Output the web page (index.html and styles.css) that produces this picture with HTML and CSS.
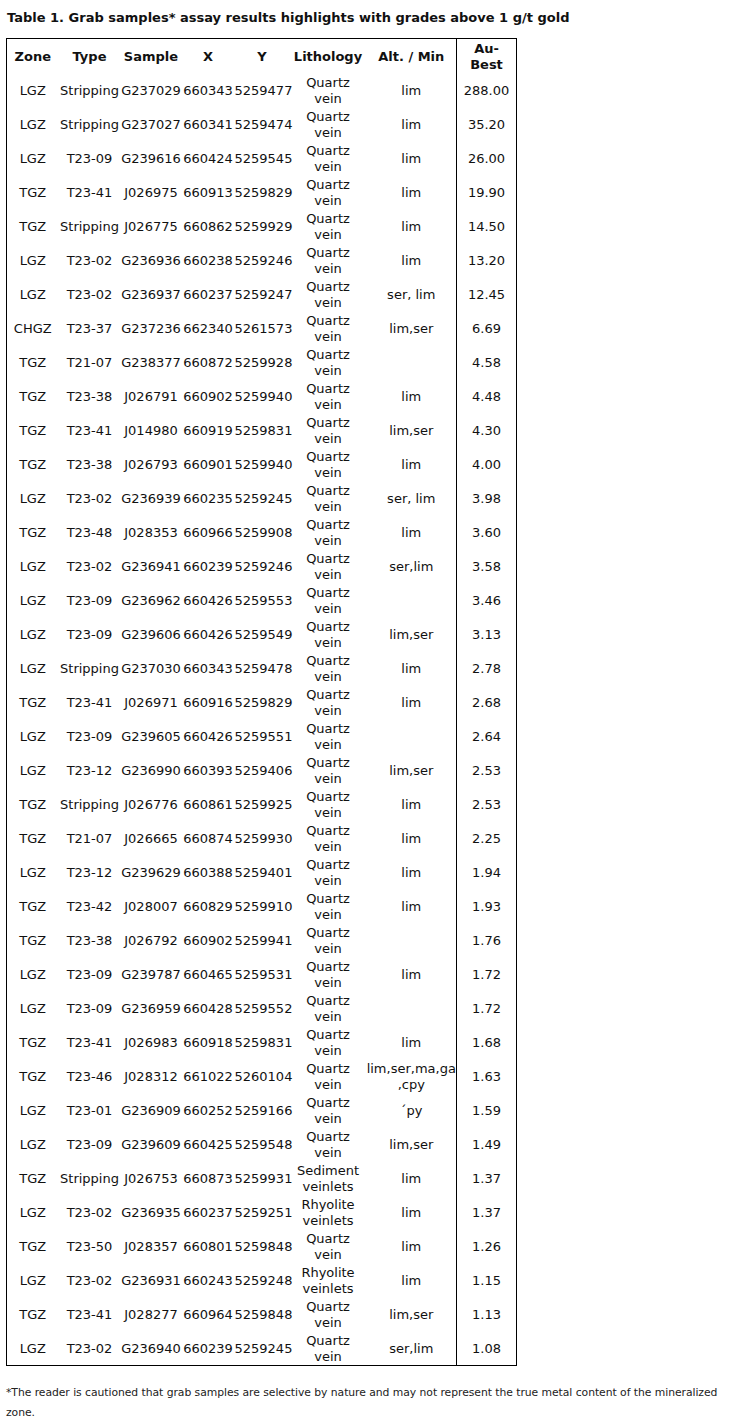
FILE: index.html
```html
<!DOCTYPE html>
<html>
<head>
<meta charset="utf-8">
<link rel="stylesheet" href="styles.css">
</head>
<body>
<p class="title">Table 1. Grab samples* assay results highlights with grades above 1 g/t gold</p>
<table class="assay">
<colgroup>
<col class="c-zone"><col class="c-type"><col class="c-sample"><col class="c-x"><col class="c-y"><col class="c-lith"><col class="c-alt"><col class="c-au">
</colgroup>
<thead>
<tr><th>Zone</th><th>Type</th><th>Sample</th><th>X</th><th>Y</th><th>Lithology</th><th>Alt. / Min</th><th class="au">Au-<br>Best</th></tr>
</thead>
<tbody>
<tr><td>LGZ</td><td>Stripping</td><td>G237029</td><td>660343</td><td>5259477</td><td>Quartz<br>vein</td><td>lim</td><td class="au">288.00</td></tr>
<tr><td>LGZ</td><td>Stripping</td><td>G237027</td><td>660341</td><td>5259474</td><td>Quartz<br>vein</td><td>lim</td><td class="au">35.20</td></tr>
<tr><td>LGZ</td><td>T23-09</td><td>G239616</td><td>660424</td><td>5259545</td><td>Quartz<br>vein</td><td>lim</td><td class="au">26.00</td></tr>
<tr><td>TGZ</td><td>T23-41</td><td>J026975</td><td>660913</td><td>5259829</td><td>Quartz<br>vein</td><td>lim</td><td class="au">19.90</td></tr>
<tr><td>TGZ</td><td>Stripping</td><td>J026775</td><td>660862</td><td>5259929</td><td>Quartz<br>vein</td><td>lim</td><td class="au">14.50</td></tr>
<tr><td>LGZ</td><td>T23-02</td><td>G236936</td><td>660238</td><td>5259246</td><td>Quartz<br>vein</td><td>lim</td><td class="au">13.20</td></tr>
<tr><td>LGZ</td><td>T23-02</td><td>G236937</td><td>660237</td><td>5259247</td><td>Quartz<br>vein</td><td>ser, lim</td><td class="au">12.45</td></tr>
<tr><td>CHGZ</td><td>T23-37</td><td>G237236</td><td>662340</td><td>5261573</td><td>Quartz<br>vein</td><td>lim,ser</td><td class="au">6.69</td></tr>
<tr><td>TGZ</td><td>T21-07</td><td>G238377</td><td>660872</td><td>5259928</td><td>Quartz<br>vein</td><td></td><td class="au">4.58</td></tr>
<tr><td>TGZ</td><td>T23-38</td><td>J026791</td><td>660902</td><td>5259940</td><td>Quartz<br>vein</td><td>lim</td><td class="au">4.48</td></tr>
<tr><td>TGZ</td><td>T23-41</td><td>J014980</td><td>660919</td><td>5259831</td><td>Quartz<br>vein</td><td>lim,ser</td><td class="au">4.30</td></tr>
<tr><td>TGZ</td><td>T23-38</td><td>J026793</td><td>660901</td><td>5259940</td><td>Quartz<br>vein</td><td>lim</td><td class="au">4.00</td></tr>
<tr><td>LGZ</td><td>T23-02</td><td>G236939</td><td>660235</td><td>5259245</td><td>Quartz<br>vein</td><td>ser, lim</td><td class="au">3.98</td></tr>
<tr><td>TGZ</td><td>T23-48</td><td>J028353</td><td>660966</td><td>5259908</td><td>Quartz<br>vein</td><td>lim</td><td class="au">3.60</td></tr>
<tr><td>LGZ</td><td>T23-02</td><td>G236941</td><td>660239</td><td>5259246</td><td>Quartz<br>vein</td><td>ser,lim</td><td class="au">3.58</td></tr>
<tr><td>LGZ</td><td>T23-09</td><td>G236962</td><td>660426</td><td>5259553</td><td>Quartz<br>vein</td><td></td><td class="au">3.46</td></tr>
<tr><td>LGZ</td><td>T23-09</td><td>G239606</td><td>660426</td><td>5259549</td><td>Quartz<br>vein</td><td>lim,ser</td><td class="au">3.13</td></tr>
<tr><td>LGZ</td><td>Stripping</td><td>G237030</td><td>660343</td><td>5259478</td><td>Quartz<br>vein</td><td>lim</td><td class="au">2.78</td></tr>
<tr><td>TGZ</td><td>T23-41</td><td>J026971</td><td>660916</td><td>5259829</td><td>Quartz<br>vein</td><td>lim</td><td class="au">2.68</td></tr>
<tr><td>LGZ</td><td>T23-09</td><td>G239605</td><td>660426</td><td>5259551</td><td>Quartz<br>vein</td><td></td><td class="au">2.64</td></tr>
<tr><td>LGZ</td><td>T23-12</td><td>G236990</td><td>660393</td><td>5259406</td><td>Quartz<br>vein</td><td>lim,ser</td><td class="au">2.53</td></tr>
<tr><td>TGZ</td><td>Stripping</td><td>J026776</td><td>660861</td><td>5259925</td><td>Quartz<br>vein</td><td>lim</td><td class="au">2.53</td></tr>
<tr><td>TGZ</td><td>T21-07</td><td>J026665</td><td>660874</td><td>5259930</td><td>Quartz<br>vein</td><td>lim</td><td class="au">2.25</td></tr>
<tr><td>LGZ</td><td>T23-12</td><td>G239629</td><td>660388</td><td>5259401</td><td>Quartz<br>vein</td><td>lim</td><td class="au">1.94</td></tr>
<tr><td>TGZ</td><td>T23-42</td><td>J028007</td><td>660829</td><td>5259910</td><td>Quartz<br>vein</td><td>lim</td><td class="au">1.93</td></tr>
<tr><td>TGZ</td><td>T23-38</td><td>J026792</td><td>660902</td><td>5259941</td><td>Quartz<br>vein</td><td></td><td class="au">1.76</td></tr>
<tr><td>LGZ</td><td>T23-09</td><td>G239787</td><td>660465</td><td>5259531</td><td>Quartz<br>vein</td><td>lim</td><td class="au">1.72</td></tr>
<tr><td>LGZ</td><td>T23-09</td><td>G236959</td><td>660428</td><td>5259552</td><td>Quartz<br>vein</td><td></td><td class="au">1.72</td></tr>
<tr><td>TGZ</td><td>T23-41</td><td>J026983</td><td>660918</td><td>5259831</td><td>Quartz<br>vein</td><td>lim</td><td class="au">1.68</td></tr>
<tr><td>TGZ</td><td>T23-46</td><td>J028312</td><td>661022</td><td>5260104</td><td>Quartz<br>vein</td><td>lim,ser,ma,ga<br>,cpy</td><td class="au">1.63</td></tr>
<tr><td>LGZ</td><td>T23-01</td><td>G236909</td><td>660252</td><td>5259166</td><td>Quartz<br>vein</td><td>´py</td><td class="au">1.59</td></tr>
<tr><td>LGZ</td><td>T23-09</td><td>G239609</td><td>660425</td><td>5259548</td><td>Quartz<br>vein</td><td>lim,ser</td><td class="au">1.49</td></tr>
<tr><td>TGZ</td><td>Stripping</td><td>J026753</td><td>660873</td><td>5259931</td><td>Sediment<br>veinlets</td><td>lim</td><td class="au">1.37</td></tr>
<tr><td>LGZ</td><td>T23-02</td><td>G236935</td><td>660237</td><td>5259251</td><td>Rhyolite<br>veinlets</td><td>lim</td><td class="au">1.37</td></tr>
<tr><td>TGZ</td><td>T23-50</td><td>J028357</td><td>660801</td><td>5259848</td><td>Quartz<br>vein</td><td>lim</td><td class="au">1.26</td></tr>
<tr><td>LGZ</td><td>T23-02</td><td>G236931</td><td>660243</td><td>5259248</td><td>Rhyolite<br>veinlets</td><td>lim</td><td class="au">1.15</td></tr>
<tr><td>TGZ</td><td>T23-41</td><td>J028277</td><td>660964</td><td>5259848</td><td>Quartz<br>vein</td><td>lim,ser</td><td class="au">1.13</td></tr>
<tr><td>LGZ</td><td>T23-02</td><td>G236940</td><td>660239</td><td>5259245</td><td>Quartz<br>vein</td><td>ser,lim</td><td class="au">1.08</td></tr>
</tbody>
</table>
<p class="note">*The reader is cautioned that grab samples are selective by nature and may not represent the true metal content of the mineralized zone.</p>
</body>
</html>
```

FILE: styles.css
```css
body {
  margin: 0;
  padding: 0 6px 0 6px;
  font-family: Verdana, "DejaVu Sans", sans-serif;
  color: #000;
  background: #fff;
}
.title {
  margin: 0;
  padding-top: 10px;
  padding-left: 1px;
  font-size: 13px;
  line-height: 16px;
  font-weight: bold;
  color: #111;
}
.assay {
  margin-top: 12px;
  border-collapse: collapse;
  border: 1px solid #000;
  table-layout: fixed;
  width: 511px;
  font-size: 13px;
  color: #111;
}
.c-zone { width: 52px; }
.c-type { width: 62px; }
.c-sample { width: 61px; }
.c-x { width: 53px; }
.c-y { width: 55px; }
.c-lith { width: 77px; }
.c-alt { width: 90px; }
.c-au { width: 60px; }
.assay th,
.assay td {
  padding: 2px 0 0 0;
  height: 32px;
  line-height: 16px;
  text-align: center;
  vertical-align: middle;
  white-space: nowrap;
}
.assay th {
  font-weight: bold;
}
.assay .au {
  border-left: 1px solid #000;
}
.note {
  margin: 17px 0 0 0;
  font-size: 10.8px;
  letter-spacing: -0.05px;
  line-height: 20px;
  color: #222;
}
```
